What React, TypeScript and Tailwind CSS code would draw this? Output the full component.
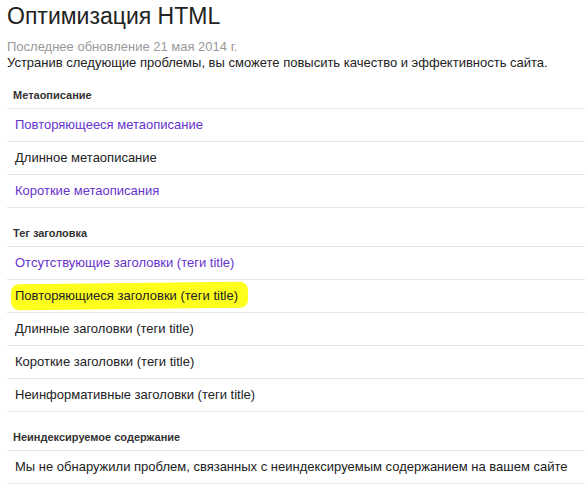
import React from "react";

type Item = { text: string; link?: boolean; hl?: boolean };

const sections: { title: string; items: Item[] }[] = [
  {
    title: "Метаописание",
    items: [
      { text: "Повторяющееся метаописание", link: true },
      { text: "Длинное метаописание" },
      { text: "Короткие метаописания", link: true },
    ],
  },
  {
    title: "Тег заголовка",
    items: [
      { text: "Отсутствующие заголовки (теги title)", link: true },
      { text: "Повторяющиеся заголовки (теги title)", hl: true },
      { text: "Длинные заголовки (теги title)" },
      { text: "Короткие заголовки (теги title)" },
      { text: "Неинформативные заголовки (теги title)" },
    ],
  },
  {
    title: "Неиндексируемое содержание",
    items: [
      {
        text: "Мы не обнаружили проблем, связанных с неиндексируемым содержанием на вашем сайте",
      },
    ],
  },
];

export default function App() {
  return (
    <div
      className="w-[585px] h-[489px] overflow-hidden bg-white pl-[7px] text-[#222222]"
      style={{ fontFamily: '"Liberation Sans", Arial, sans-serif' }}
    >
      <h1 className="mt-[3px] text-[23px] leading-[26px] text-[#222222]">Оптимизация HTML</h1>
      <div className="mt-[10px] text-[13px] leading-[16px] text-[#999999]">
        Последнее обновление 21 мая 2014 г.
      </div>
      <div className="text-[13px] leading-[16px] text-[#222222]">
        Устранив следующие проблемы, вы сможете повысить качество и эффективность сайта.
      </div>
      {sections.map((s, i) => (
        <div key={i}>
          <div
            className={
              "border-b border-[#e5e5e5] pl-[6px] pb-[5px] text-[11px] leading-[16px] font-bold text-[#333333] " +
              (i === 0 ? "pt-[16px]" : "pt-[17px]")
            }
          >
            {s.title}
          </div>
          {s.items.map((it, j) => (
            <div
              key={j}
              className="flex h-[33px] items-center border-b border-[#e5e5e5] pl-[8px] text-[13px] leading-[16px]"
            >
              {it.hl ? (
                <span className="relative">
                  <span className="absolute left-[-4px] right-[-10px] top-[-5px] bottom-[-5px] rounded-[8px] -rotate-[0.6deg] bg-[#ffff1e]" />
                  <span className="relative text-[#222222]">{it.text}</span>
                </span>
              ) : (
                <span className={it.link ? "text-[#6633cc]" : "text-[#222222]"}>{it.text}</span>
              )}
            </div>
          ))}
        </div>
      ))}
    </div>
  );
}
